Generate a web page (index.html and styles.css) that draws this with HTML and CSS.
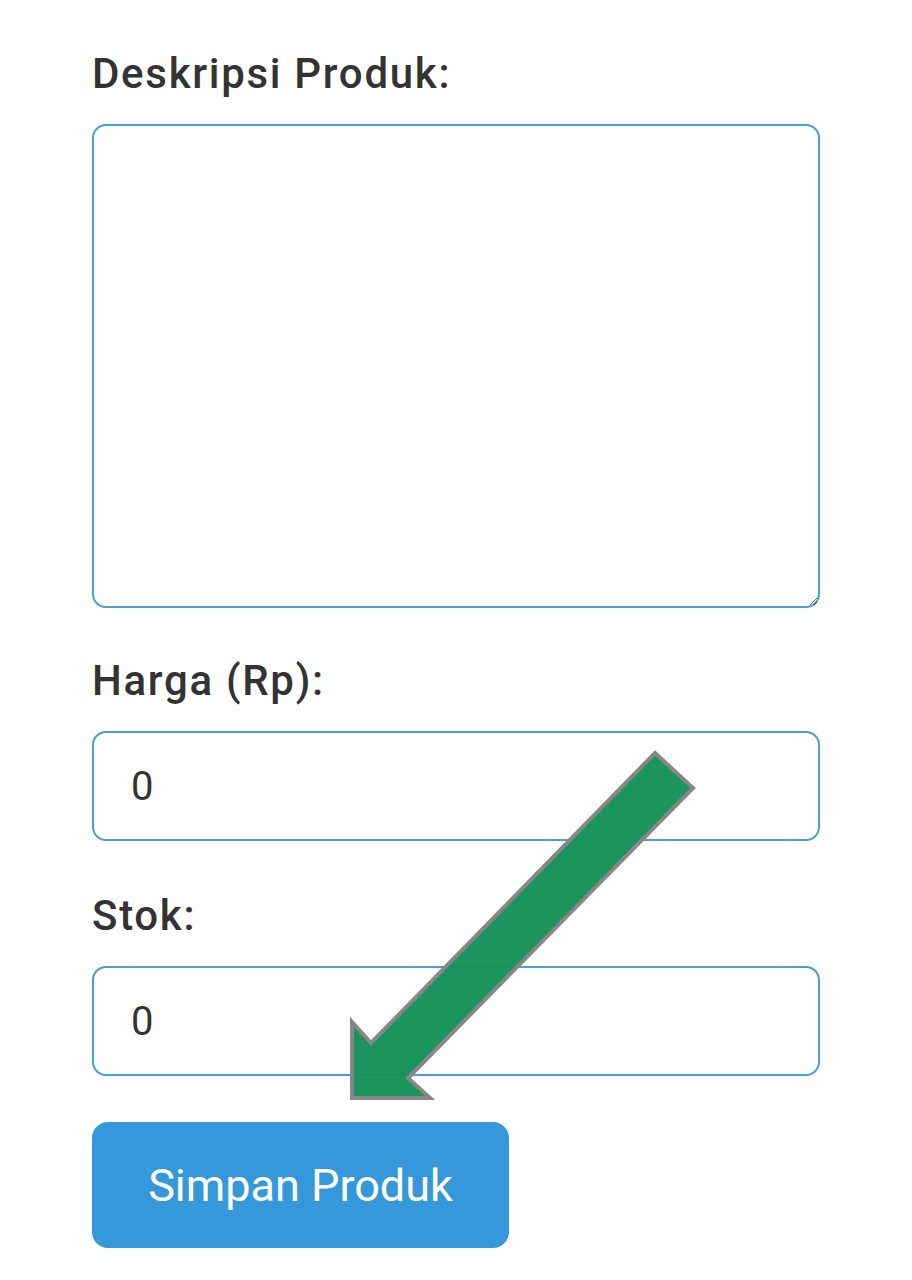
FILE: index.html
```html
<!DOCTYPE html>
<html lang="id">
<head>
<meta charset="utf-8">
<title>Form Produk</title>
<link rel="stylesheet" href="styles.css">
</head>
<body>
<form class="form">
  <label class="label" for="desc">Deskripsi Produk:</label>
  <textarea class="field textarea" id="desc"></textarea>
  <label class="label" for="harga">Harga (Rp):</label>
  <input class="field input" id="harga" type="text" value="0">
  <label class="label" for="stok">Stok:</label>
  <input class="field input input-last" id="stok" type="text" value="0">
  <button class="btn" type="button">Simpan Produk</button>
</form>
<svg class="arrow" width="912" height="1280" viewBox="0 0 912 1280" aria-hidden="true">
  <polygon points="655,753 693,788 408,1078 430,1098 352,1098 352,1022 371,1043" />
</svg>
</body>
</html>
```
FILE: styles.css
```css
html, body {
  margin: 0;
  padding: 0;
  background: #ffffff;
}
body {
  position: relative;
  width: 912px;
  height: 1280px;
  overflow: hidden;
  font-family: Roboto, "Liberation Sans", Arial, sans-serif;
  color: #333333;
}
.form {
  display: flex;
  flex-direction: column;
  align-items: flex-start;
  padding: 51px 0 0 92px;
  width: 728px;
}
.label {
  display: block;
  font-size: 42px;
  line-height: 46px;
  font-weight: 500;
  letter-spacing: 1.7px;
  color: #333333;
  margin-bottom: 27px;
}
.field {
  box-sizing: border-box;
  width: 728px;
  border: 2px solid #4a9ed6;
  border-radius: 14px;
  background: #ffffff;
  font-family: Roboto, "Liberation Sans", Arial, sans-serif;
  font-size: 40px;
  color: #333333;
  outline: none;
  margin: 0;
}
.textarea {
  height: 484px;
  resize: vertical;
  padding: 20px 36px;
  margin-bottom: 50px;
}
.input {
  height: 110px;
  padding: 0 37px;
  margin-bottom: 52px;
}
.input-last {
  margin-bottom: 46px;
}
.btn {
  box-sizing: border-box;
  width: 417px;
  height: 126px;
  border: none;
  border-radius: 16px;
  background: #3498db;
  color: #ffffff;
  font-family: Roboto, "Liberation Sans", Arial, sans-serif;
  font-size: 45px;
  font-weight: 400;
  padding: 0;
  cursor: pointer;
}
.arrow {
  position: absolute;
  left: 0;
  top: 0;
  pointer-events: none;
}
.arrow polygon {
  fill: #16925a;
  fill-opacity: 0.98;
  stroke: #878787;
  stroke-width: 4;
  stroke-linejoin: miter;
}
```
